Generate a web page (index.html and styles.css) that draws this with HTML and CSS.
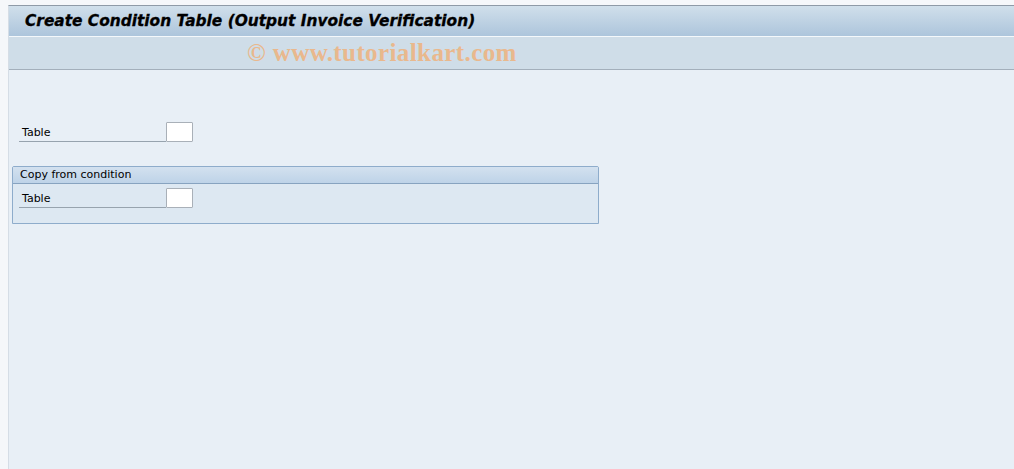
FILE: index.html
```html
<!DOCTYPE html>
<html lang="en">
  <head>
    <meta charset="UTF-8" />
    <title>Create Condition Table (Output Invoice Verification)</title>
    <link rel="stylesheet" href="styles.css">
  </head>
  <body>
    <div class="frame">
      <div class="titlebar">
        <h1>Create Condition Table (Output Invoice Verification)</h1>
      </div>
      <div class="toolbar">
        <span class="watermark">© www.tutorialkart.com</span>
      </div>
      <div class="content">
        <div class="row">
          <label class="label">Table</label>
          <input class="field" type="text" />
        </div>
        <div class="group">
          <div class="group-title">Copy from condition</div>
          <div class="group-body">
            <div class="row">
              <label class="label">Table</label>
              <input class="field" type="text" />
            </div>
          </div>
        </div>
      </div>
    </div>
  </body>
</html>
```

FILE: styles.css
```css
html, body {
  height: 100%;
}
body {
  margin: 0;
  background: #f5f7fa;
  font-family: "DejaVu Sans", Verdana, sans-serif;
  font-size: 11px;
  color: #000;
}
.frame {
  margin: 5px 0 0 8px;
  height: calc(100% - 5px);
  display: flex;
  flex-direction: column;
  border-top: 1px solid #8e9aa7;
  border-left: 1px solid #d5dde6;
}
.titlebar {
  height: 30px;
  background: linear-gradient(#d0dfeb, #adc5dc);
  border-bottom: 1px solid #f4f8fb;
  display: flex;
  align-items: center;
}
.titlebar h1 {
  margin: 0 0 1px 16px;
  font-size: 15.4px;
  font-weight: bold;
  font-style: italic;
  color: #000;
  -webkit-text-stroke: 0.3px #000;
  white-space: nowrap;
}
.toolbar {
  height: 32px;
  background: #cfdde8;
  border-bottom: 1px solid #a3afbb;
  display: flex;
  align-items: center;
}
.watermark {
  margin-left: 238px;
  font-family: "Liberation Serif", serif;
  font-weight: bold;
  font-size: 25px;
  letter-spacing: 0.4px;
  color: #e9b88d;
}
.content {
  flex: 1;
  background: #e8eff6;
  padding-top: 52px;
}
.row {
  display: flex;
  margin-left: 10px;
  height: 20px;
}
.label {
  width: 144px;
  padding-left: 3px;
  padding-top: 1px;
  height: 18px;
  border-bottom: 1px solid #97a3ae;
  line-height: 19px;
}
.field {
  box-sizing: border-box;
  width: 27px;
  height: 20px;
  margin: 0;
  padding: 0;
  background: #fff;
  border: 1px solid #a9b0b8;
  border-radius: 1px;
}
.group {
  margin: 24px 0 0 3px;
  width: 585px;
  border: 1px solid #8eaccb;
  border-radius: 2px 2px 0 0;
  background: #dde8f2;
}
.group-title {
  height: 16px;
  line-height: 16px;
  padding-left: 7px;
  background: linear-gradient(#d3e1ef, #bed3e8);
  border-bottom: 1px solid #87a3c0;
}
.group-body {
  padding: 4px 0 15px;
}
.group-body .row {
  margin-left: 6px;
}
```
